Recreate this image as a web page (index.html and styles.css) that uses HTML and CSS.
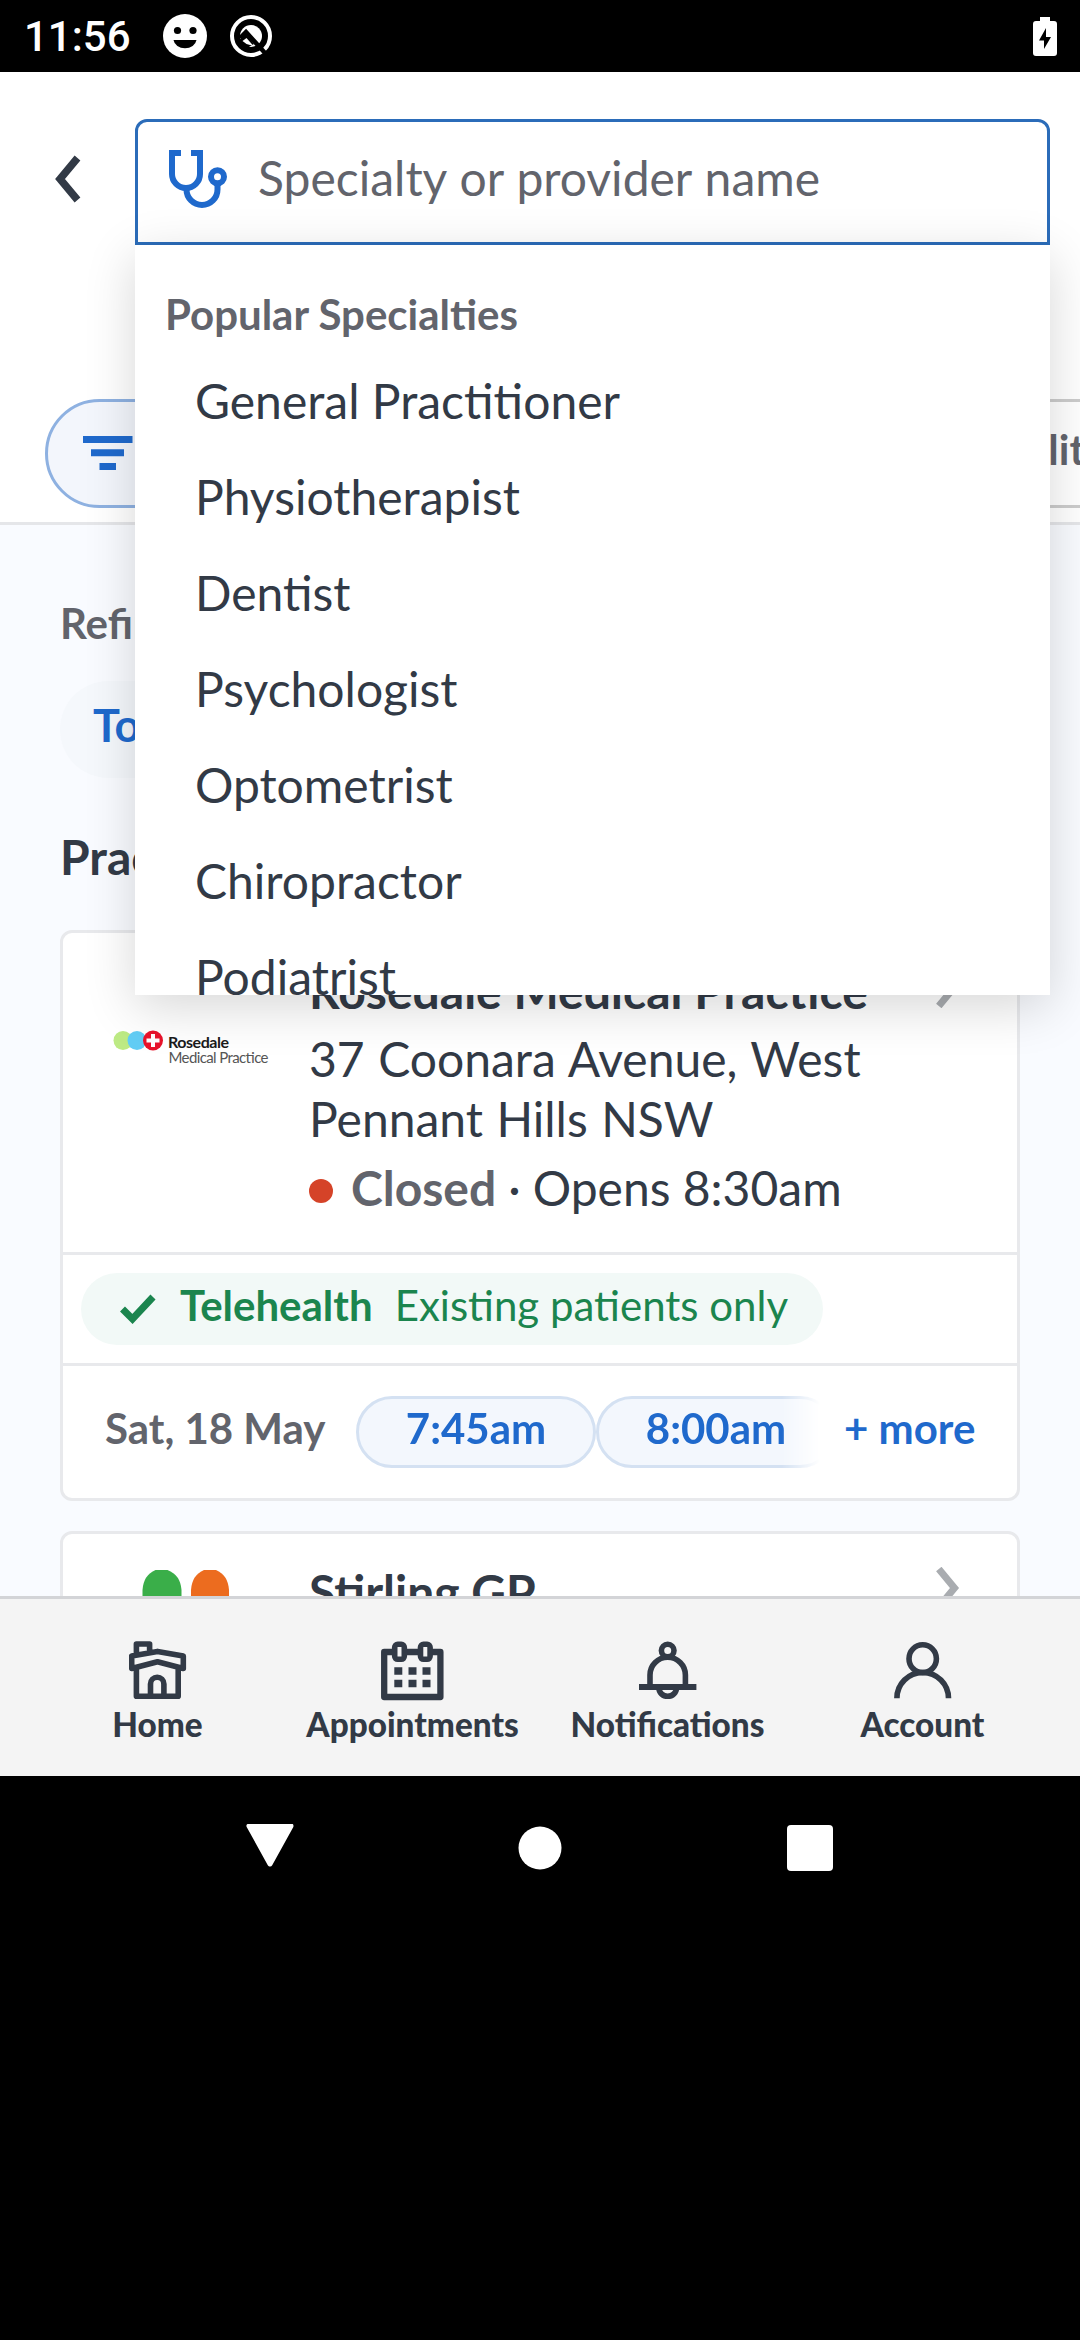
FILE: index.html
```html
<!DOCTYPE html>
<html lang="en">
<head>
<meta charset="utf-8">
<title>Find a provider</title>
<link rel="stylesheet" href="styles.css">
</head>
<body>
<div class="phone">
  <div class="status-bar">
    <span class="clock">11:56</span>
    <svg class="status-face" width="44" height="44" viewBox="0 0 44 44"><circle cx="22" cy="22" r="22" fill="#fff"/><circle cx="14.5" cy="16.5" r="3.6"/><circle cx="30" cy="16.5" r="3.6"/><path d="M10.5 26h23a11.6 9.5 0 0 1-23 0z"/></svg>
    <svg class="status-q" width="44" height="44" viewBox="0 0 44 44" fill="none"><circle cx="22" cy="22" r="19" stroke="#fff" stroke-width="4"/><circle cx="22" cy="22" r="11" fill="#fff"/><path d="M11 24l6-6 19 21" stroke="#000" stroke-width="4.5"/><path d="M9 27l8-7 8 10-7 4z" fill="#000"/><path d="M17.500 24l7 8-7-2-4-3z" fill="#fff"/></svg>
    <svg class="battery" width="24" height="40" viewBox="0 0 24 40"><path d="M7 0h10v4h4q3 0 3 3v29q0 3-3 3H3q-3 0-3-3V7q0-3 3-3h4z" fill="#fff"/><path d="M13 11L6 23.500h5V32l7-12h-5z"/></svg>
  </div>

  <div class="app">
    <header class="top">
      <div class="search-row">
        <svg class="back" width="26" height="48" viewBox="0 0 26 48"><path d="M22.500 3L5 24l17.500 21" fill="none" stroke="#323a46" stroke-width="7.500"/></svg>
        <div class="search">
          <svg width="58" height="58" viewBox="0 0 58 58" fill="none" stroke="#1f69cc" stroke-width="6"><path d="M12 3H3v21a14 14 0 0 0 28 0V3h-9"/><path d="M17.500 38v1.500a15.500 15.500 0 0 0 31 0V35"/><circle cx="48.500" cy="26.700" r="6.500"/></svg>
          <span>Specialty or provider name</span>
          <div class="dropdown">
            <h2>Popular Specialties</h2>
            <ul>
              <li>General Practitioner</li>
              <li>Physiotherapist</li>
              <li>Dentist</li>
              <li>Psychologist</li>
              <li>Optometrist</li>
              <li>Chiropractor</li>
              <li>Podiatrist</li>
            </ul>
          </div>
        </div>
      </div>
      <div class="chips">
        <div class="chip chip-filter"><svg width="50" height="34" viewBox="0 0 50 34" fill="#1f69cc"><path d="M0 0h49.500v7H0zM8 13.300h33v7H8zM16.500 27H33v7H16.500z"/></svg></div>
        <div class="chip chip-availability">Availability</div>
      </div>
    </header>

    <main class="results">
      <div class="refine">Refine</div>
      <div class="day">Today</div>
      <h1>Practices</h1>

      <article class="card">
        <div class="practice">
          <svg class="logo" width="192" height="120" viewBox="0 0 192 120">
            <circle cx="33" cy="80.500" r="9.500" fill="#bdea84"/><circle cx="47" cy="80.500" r="9.500" fill="#62cdf5"/><circle cx="63" cy="80.500" r="10" fill="#e8132b"/>
            <path d="M63 74v13M56.500 80.500h13" stroke="#fff" stroke-width="4"/>
            <text class="logo-bold" x="78" y="87.500" textLength="61">Rosedale</text>
            <text class="logo-thin" x="78.500" y="102.500" textLength="100">Medical Practice</text>
          </svg>
          <div class="details">
            <h3>Rosedale Medical Practice</h3>
            <p>37 Coonara Avenue, West Pennant Hills NSW</p>
            <div class="hours"><i></i><b>Closed</b><span>·</span><span>Opens 8:30am</span></div>
          </div>
          <svg class="arrow" width="24" height="42" viewBox="0 0 24 42"><path d="M2.800 2L18.500 21 2.800 40" fill="none" stroke="#a9acb0" stroke-width="7"/></svg>
        </div>
        <div class="tele">
          <div class="tele-pill">
            <svg width="36" height="30" viewBox="0 0 36 30"><path d="M2.500 15L12.500 25 33 3" fill="none" stroke="#1b854e" stroke-width="7"/></svg>
            <b>Telehealth</b><span>Existing patients only</span>
          </div>
        </div>
        <div class="times">
          <span class="date">Sat, 18 May</span>
          <div class="slots"><span class="slot">7:45am</span><span class="slot">8:00am</span></div>
          <span class="more">+ more</span>
        </div>
      </article>

      <article class="card">
        <div class="practice">
          <svg class="logo" width="192" height="120" viewBox="0 0 192 120">
            <path d="M52.500 90V29q1-15 13-20h12q13 5 14 20v61z" fill="#3aae49"/>
            <path d="M101 90V29q1-15 13-20h12q12 5 13 20v61z" fill="#ec6c1f"/>
          </svg>
          <div class="details"><h3>Stirling GP</h3></div>
          <svg class="arrow" width="24" height="42" viewBox="0 0 24 42"><path d="M2.800 2L18.500 21 2.800 40" fill="none" stroke="#a9acb0" stroke-width="7"/></svg>
        </div>
      </article>
    </main>

    <nav class="tabs">
      <div class="tab">
        <svg width="58" height="60" viewBox="0 0 58 60"><path d="M7.400 14V3h13.200v8M2.700 15l25.800-4.600L54.300 15v12.500L28.500 20.700 2.700 27.500zM7.400 28v27.300h41.800V28M21.500 55V43a6.700 6.700 0 0 1 13.400 0v12"/></svg>
        <span>Home</span>
      </div>
      <div class="tab">
        <svg width="63" height="60" viewBox="0 0 63 60"><path d="M13 11H3.200v45h56.200V11H50M25 11h13" stroke-width="6.300"/><rect x="13.700" y="3.300" width="9.600" height="15" rx="3"/><rect x="39.500" y="3.300" width="9.600" height="15" rx="3"/><path d="M13.300 30h8M27.500 30h8M41.500 30h8M13.300 42.500h8M27.500 42.500h8M41.500 42.500h8" stroke-width="7.500"/></svg>
        <span>Appointments</span>
      </div>
      <div class="tab">
        <svg width="58" height="60" viewBox="0 0 58 60"><circle cx="28.700" cy="9.600" r="6.300"/><path d="M11 45V34a17.700 17.700 0 0 1 35.400 0v11M19.900 47a8.800 8.300 0 0 0 17.600 0"/><path d="M0 46h57.400" stroke-width="6"/></svg>
        <span>Notifications</span>
      </div>
      <div class="tab">
        <svg width="58" height="60" viewBox="0 0 58 60"><ellipse cx="28.700" cy="17.700" rx="13.700" ry="13.900"/><path d="M2.900 57.300a25.800 25.800 0 0 1 51.600 0"/></svg>
        <span>Account</span>
      </div>
    </nav>
  </div>

  <div class="system-nav">
    <svg width="48" height="48" viewBox="0 0 48 48"><path d="M3 2h42L24 40z" fill="#fff" stroke="#fff" stroke-width="5" stroke-linejoin="round"/></svg>
    <svg width="48" height="48" viewBox="0 0 48 48"><circle cx="24" cy="24" r="21.500" fill="#fff"/></svg>
    <svg width="48" height="48" viewBox="0 0 48 48"><rect x="1" y="1" width="46" height="46" rx="4" fill="#fff"/></svg>
  </div>
</div>
</body>
</html>
```

FILE: styles.css
```css
* { box-sizing: border-box; margin: 0; padding: 0; }
body { background: #000; font-family: Lato, "Open Sans", sans-serif; color: #323a46; }
svg { display: block; flex: none; }
.phone { width: 1080px; height: 2340px; overflow: hidden; background: #000; }

.status-bar { height: 72px; padding: 0 23px 0 24px; display: flex; align-items: center; }
.clock { font: 500 42px/72px Roboto, sans-serif; color: #fff; width: 139px; padding-top: 2px; }
.status-q { margin-left: 22px; }
.battery { margin: 1px 0 0 auto; }

.app { height: 1704px; display: flex; flex-direction: column; background: #f9fbff; overflow: hidden; }

.top { height: 453px; flex: none; background: #fff; border-bottom: 3px solid #e5e6e9; padding-top: 47px; }
.search-row { display: flex; align-items: center; padding: 0 30px 0 55px; }
.back { margin-bottom: 6px; }
.search { position: relative; z-index: 2; width: 915px; height: 126px; margin-left: 54px; padding: 0 30px 6px 31px; display: flex; align-items: center; gap: 31px; border: 3px solid #2b6cb9; border-radius: 12px 12px 0 0; font-size: 48px; color: #62646c; }
.search > span { padding-bottom: 3px; word-spacing: 1px; }
.dropdown { position: absolute; left: -3px; top: 123px; width: 915px; height: 750px; padding-top: 31px; background: #fff; overflow: hidden; box-shadow: 0 12px 48px rgba(0, 0, 0, .16); }
.dropdown h2 { padding-left: 30px; font-size: 42px; line-height: 77px; color: #62646c; }
.dropdown ul { list-style: none; padding-left: 60px; }
.dropdown li { font-size: 48px; line-height: 96px; color: #323a46; }

.chips { display: flex; width: 1080px; padding: 154px 0 0 45px; overflow: hidden; }
.chip { flex: none; height: 109px; border: 3px solid #ccc; border-radius: 55px; font-size: 42px; line-height: 94px; font-weight: 700; color: #62646c; }
.chip-filter { width: 200px; padding: 34px 0 0 35px; background: #f3f6fc; border-color: #8eb1e1; }
.chip-availability { width: 300px; margin-left: 617px; padding-left: 36px; }

.results { flex: none; height: 1071px; padding: 0 60px; overflow: hidden; }
.refine { padding-top: 73px; font-size: 42px; line-height: 50px; font-weight: 700; color: #62646c; }
.day { width: 180px; height: 97px; margin-top: 33px; padding-left: 33px; border-radius: 49px; background: #f5f8fc; font-size: 45px; line-height: 88px; font-weight: 700; color: #1f69cc; }
h1 { margin-top: 50px; font-size: 48px; line-height: 58px; font-weight: 700; }
.card { background: #fff; border: 3px solid #e8e9ec; border-radius: 12px; }
h1 + .card { margin-top: 44px; }
.card + .card { margin-top: 30px; }
.practice { height: 319px; padding: 27px; display: flex; align-items: flex-start; }
.logo-bold { font: 700 16px Lato, sans-serif; fill: #1b1b1b; }
.logo-thin { font: 400 15px Lato, sans-serif; fill: #555; }
.details { width: 600px; margin-left: 27px; font-size: 48px; line-height: 60px; }
h3 { font-size: 48px; line-height: 62px; margin-bottom: -2px; font-weight: 700; }
.details p { margin: 9px 0; width: 580px; word-spacing: 1.2px; }
.hours { display: flex; align-items: center; white-space: pre; }
.hours i { width: 24px; height: 24px; margin: 5px 18px 0 0; border-radius: 50%; background: #d54328; }
.hours b { color: #62646c; }
.hours span { margin-left: 12px; }
.arrow { margin: 6px 0 0 27px; }
.tele { height: 114px; border: solid #e8e9ec; border-width: 3px 0; padding: 18px; }
.tele-pill { width: 742px; height: 72px; padding: 0 0 8px 39px; display: flex; align-items: center; border-radius: 36px; background: #f2f9f7; font-size: 42px; color: #1b854e; }
.tele-pill svg { margin-top: 7px; }
.tele-pill b { margin-left: 24px; }
.tele-pill span { margin-left: 22px; white-space: nowrap; }
.times { height: 132px; padding-left: 42px; display: flex; align-items: center; font-size: 42px; font-weight: 700; line-height: 64px; }
.date { width: 251px; color: #62646c; padding-bottom: 8px; }
.slots { display: flex; color: #1f69cc; -webkit-mask-image: linear-gradient(90deg, #000 426px, transparent 464px); mask-image: linear-gradient(90deg, #000 426px, transparent 464px); }
.slot { width: 240px; height: 72px; line-height: 58px; text-align: center; border: 3px solid #d4e1f2; border-radius: 36px; background: #f3f7fd; }
.more { margin-left: 8px; padding-bottom: 8px; color: #1f69cc; }

.tabs { height: 180px; flex: none; display: flex; padding: 42px 30px 0; border-top: 3px solid #d3d4d7; background: #f4f4f4; }
.tab { width: 255px; display: flex; flex-direction: column; align-items: center; font-size: 33.3px; font-weight: 900; line-height: 40px; }
.tab span { margin-top: 3px; }
.tab svg { fill: none; stroke: #323a46; stroke-width: 5.600; stroke-linejoin: round; }

.system-nav { display: flex; justify-content: space-between; padding: 48px 246px; }
```
